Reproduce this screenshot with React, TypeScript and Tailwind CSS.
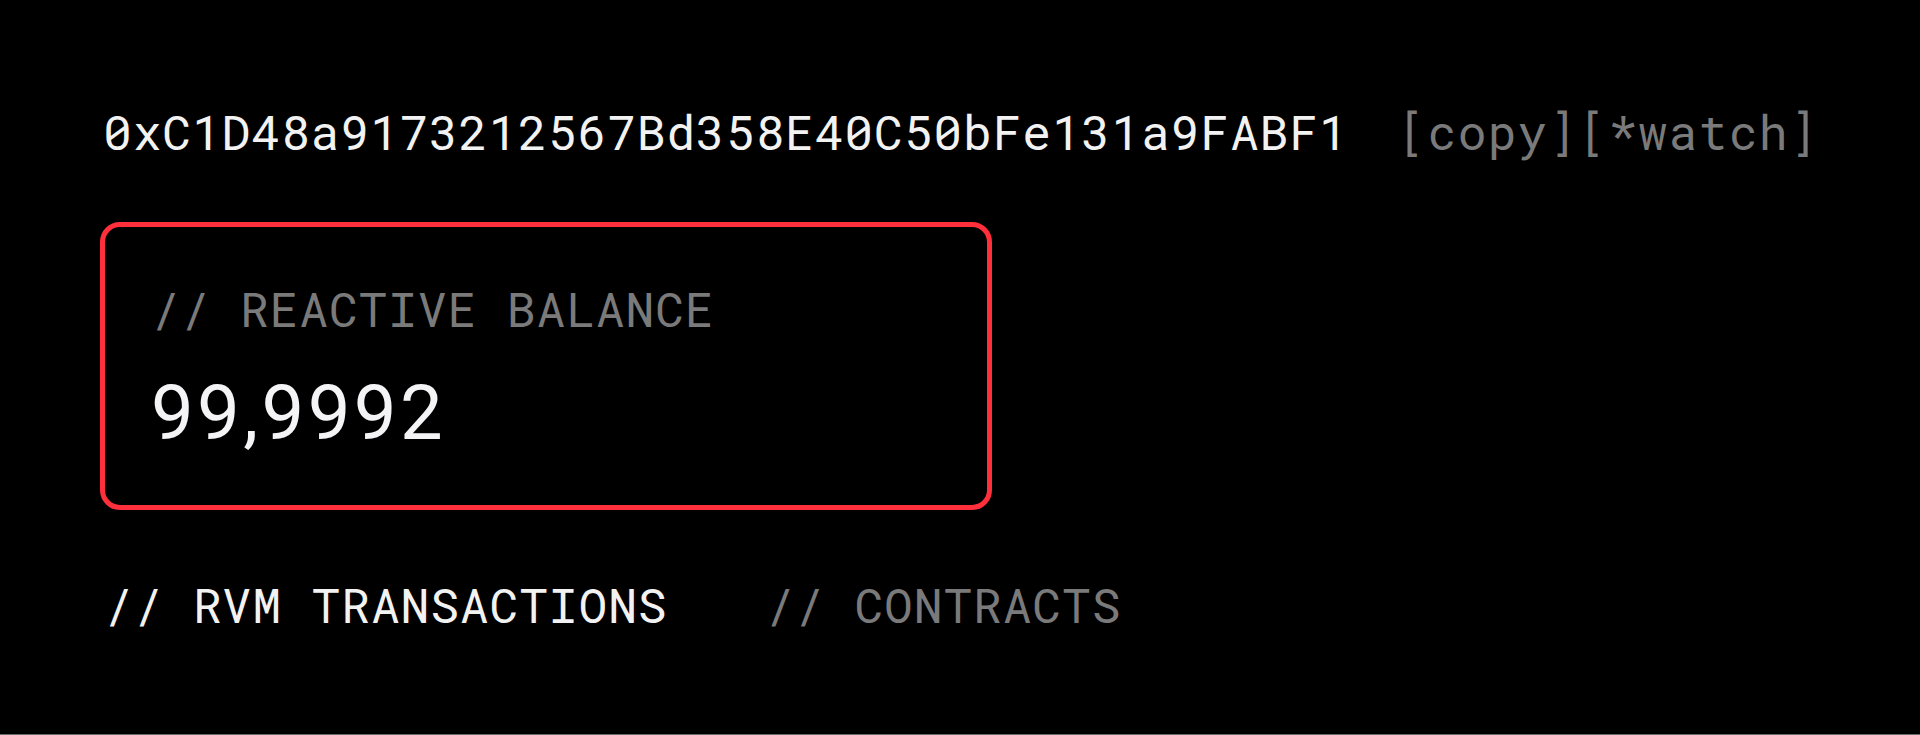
import React from 'react';

const mono = 'font-["Roboto_Mono","Liberation_Mono",monospace]';

export default function App() {
    const address = '0xC1D48a9173212567Bd358E40C50bFe131a9FABF1';
    const balance = '99,9992';

    return (
        <div className={`h-[735px] bg-black border-b border-[#6b6b6b] pl-[100px] pt-[108px] ${mono}`}>
            {/* address row */}
            <div className="flex items-baseline pl-[3px] text-[48px] leading-none tracking-[0.85px]">
                <span className="text-[#f2f2f2]">{address}</span>
                <span className="ml-[49px] text-[#7a7a7a] tracking-[1.3px] cursor-pointer">[copy]</span>
                <span className="text-[#7a7a7a] tracking-[1.3px] cursor-pointer">[*watch]</span>
            </div>

            {/* balance card */}
            <div className="mt-[66px] w-[892px] h-[288px] border-[5px] border-[#ff2f3c] rounded-[20px] pl-[46px] pt-[58px] flex flex-col">
                <div className="text-[48px] leading-none tracking-[0.85px] text-[#7a7a7a]">// REACTIVE BALANCE</div>
                <div className='mt-[42px] font-["Roboto",sans-serif] text-[76px] leading-none tracking-[3.4px] text-[#f4f4f6]'>
                    {balance}
                </div>
            </div>

            {/* tabs */}
            <div className="mt-[71px] flex pl-[4px] text-[48px] leading-none tracking-[0.85px] gap-[98px]">
                <span className="text-[#f2f2f2] cursor-pointer">// RVM TRANSACTIONS</span>
                <span className="text-[#7a7a7a] cursor-pointer">// CONTRACTS</span>
            </div>
        </div>
    );
}
